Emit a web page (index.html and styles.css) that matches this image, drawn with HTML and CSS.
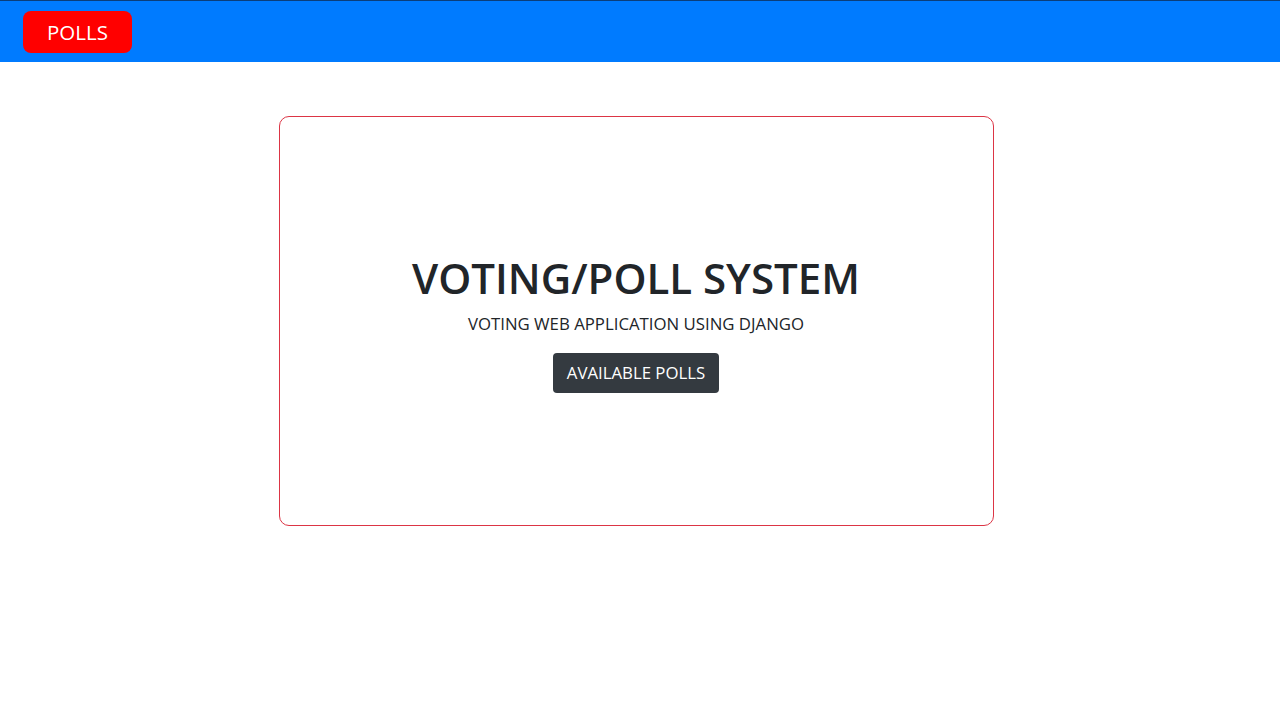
FILE: index.html
```html
<!DOCTYPE html>
<html>
<head>
<meta charset="utf-8">
<link rel="stylesheet" href="styles.css">
</head>
<body>
<nav class="navbar">
  <a class="brand" href="#">POLLS</a>
</nav>
<main class="main">
  <section class="card">
    <h1 class="title">VOTING/POLL SYSTEM</h1>
    <p class="subtitle">VOTING WEB APPLICATION USING DJANGO</p>
    <a class="btn" href="#">AVAILABLE POLLS</a>
  </section>
</main>
</body>
</html>
```

FILE: styles.css
```css
* { box-sizing: border-box; }
html, body { margin: 0; padding: 0; background: #fff; }
body {
  font-family: "Open Sans", "Noto Sans", "Liberation Sans", sans-serif;
  color: #212529;
}
.navbar {
  height: 62px;
  background: #007bff;
  border-top: 1px solid #0b3e7a;
  display: flex;
  align-items: center;
  padding: 0 23px;
}
.brand {
  display: flex;
  align-items: center;
  justify-content: center;
  width: 109px;
  height: 42px;
  background: #ff0000;
  color: #fff;
  text-decoration: none;
  font-size: 20.5px;
  border-radius: 8px;
  margin-top: 1px;
}
.main {
  display: flex;
  justify-content: center;
  padding-top: 54px;
  padding-right: 8px;
}
.card {
  width: 715px;
  height: 410px;
  border: 1px solid #dc3545;
  border-radius: 10px;
  display: flex;
  flex-direction: column;
  align-items: center;
  justify-content: center;
  padding-top: 4px;
}
.title {
  margin: 0;
  font-size: 42px;
  font-weight: 600;
  line-height: 1.2;
  color: #212529;
}
.subtitle {
  margin: 7px 0 17px;
  font-size: 16.8px;
  line-height: 1.5;
}
.btn {
  display: inline-block;
  background: #343a40;
  color: #fff;
  text-decoration: none;
  font-size: 16.8px;
  line-height: 24px;
  padding: 8px 14px;
  border-radius: 4px;
}
```
